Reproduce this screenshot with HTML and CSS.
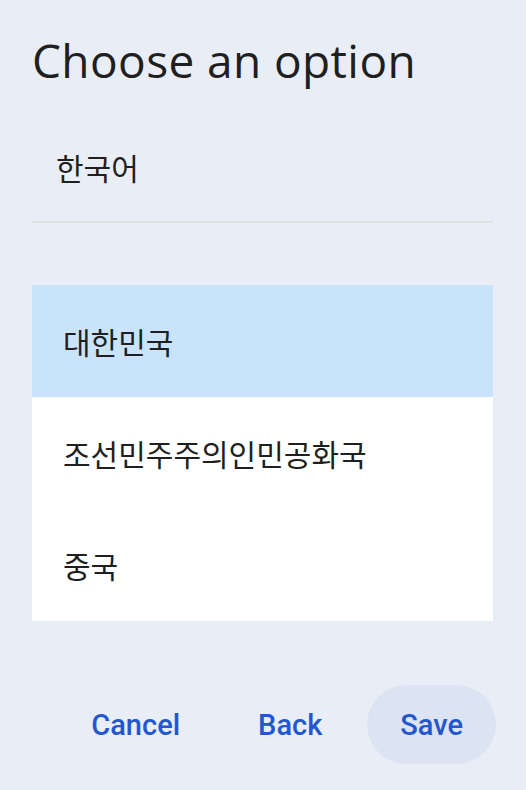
FILE: index.html
```html
<!DOCTYPE html>
<html lang="ko">
<head>
<meta charset="utf-8">
<link rel="stylesheet" href="styles.css">
</head>
<body>
<div class="dialog">
  <h1 class="title">Choose an option</h1>
  <div class="field">한국어</div>
  <ul class="list">
    <li class="item selected">대한민국</li>
    <li class="item">조선민주주의인민공화국</li>
    <li class="item">중국</li>
  </ul>
  <div class="actions">
    <button class="btn">Cancel</button>
    <button class="btn">Back</button>
    <button class="btn tonal">Save</button>
  </div>
</div>
</body>
</html>
```
FILE: styles.css
```css
html, body {
  margin: 0;
  padding: 0;
  background: #e9eef6;
}
.dialog {
  width: 526px;
  height: 790px;
  box-sizing: border-box;
  padding: 28px 33px 0 32px;
  font-family: "Open Sans", "Noto Sans CJK KR", sans-serif;
  color: #1f1f1f;
}
.title {
  margin: 0;
  font-size: 46px;
  font-weight: 400;
  line-height: 64px;
  letter-spacing: 0.4px;
}
.field {
  height: 131px;
  box-sizing: border-box;
  padding: 52px 0 0 24px;
  font-family: "Noto Sans CJK KR", sans-serif;
  font-size: 30px;
  line-height: 46px;
  border-bottom: 2px solid #dfe2e3;
}
.list {
  list-style: none;
  margin: 62px 0 0;
  padding: 0;
  background: #ffffff;
}
.item {
  height: 112px;
  display: flex;
  align-items: center;
  padding-left: 31px;
  font-family: "Noto Sans CJK KR", sans-serif;
  font-size: 30px;
  color: #1f1f1f;
}
.item.selected {
  background: #c9e4fa;
}
.actions {
  margin-top: 64px;
  display: flex;
  justify-content: flex-end;
  gap: 12px;
  margin-right: -3px;
}
.btn {
  height: 79px;
  padding: 0 33px;
  border: none;
  border-radius: 40px;
  background: transparent;
  font-family: "Roboto", sans-serif;
  font-size: 29px;
  font-weight: 500;
  color: #2357d0;
}
.btn.tonal {
  background: #dce3f2;
}
```
